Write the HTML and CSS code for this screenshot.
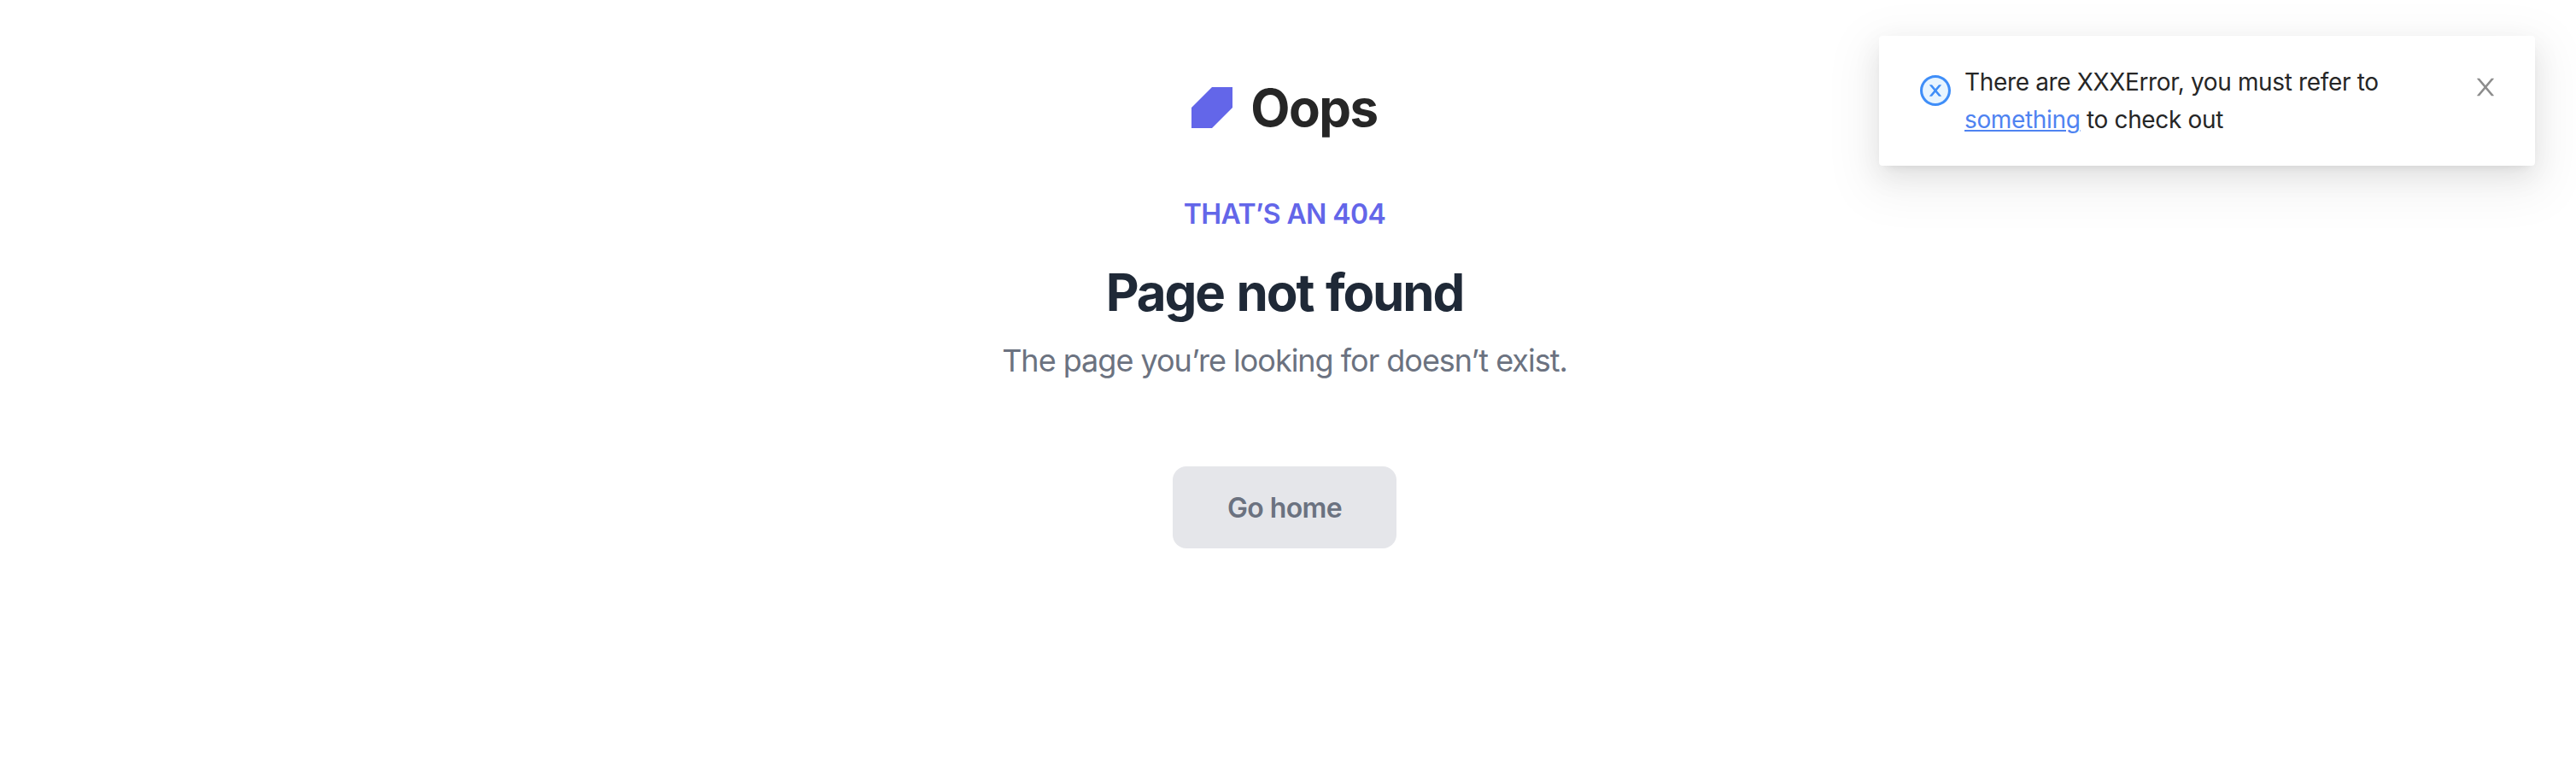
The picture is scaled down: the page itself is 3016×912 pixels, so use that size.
FILE: index.html
```html
<!DOCTYPE html>
<html lang="en">
<head>
<meta charset="utf-8">
<title>Page not found</title>
<link rel="stylesheet" href="styles.css">
</head>
<body>
<main class="page">
  <div class="brand">
    <svg class="brand-mark" viewBox="0 0 48 48"><path d="M24 0H48V24L24 48H0V24Z" fill="#6366e9"/></svg>
    <span class="brand-name">Oops</span>
  </div>
  <p class="eyebrow">THAT’S AN 404</p>
  <h1 class="title">Page not found</h1>
  <p class="subtitle">The page you’re looking for doesn’t exist.</p>
  <button class="home-button" type="button">Go home</button>
</main>
<aside class="notice" role="alert">
  <svg class="notice-icon" viewBox="64 65 896 896"><circle cx="512" cy="513" r="410" fill="#e8f5ff"/><path fill="#3f8ef8" d="M512 65C264.600 65 64 265.600 64 513s200.600 448 448 448 448-200.600 448-448S759.400 65 512 65zm0 820c-205.400 0-372-166.600-372-372s166.600-372 372-372 372 166.600 372 372-166.600 372-372 372z"/><path fill="#3f8ef8" d="M685.400 354.800c0-4.400-3.600-8-8-8l-66 .3L512 465.600l-99.300-118.400-66.100-.3c-4.400 0-8 3.500-8 8 0 1.900.7 3.700 1.900 5.200l130.100 155L340.500 670a8.320 8.320 0 00-1.900 5.200c0 4.400 3.600 8 8 8l66.100-.3L512 564.400l99.300 118.400 66 .3c4.400 0 8-3.500 8-8 0-1.900-.7-3.700-1.900-5.200L553.500 515l130.100-155c1.200-1.400 1.800-3.300 1.800-5.200z"/></svg>
  <p class="notice-text">There are XXXError, you must refer to <a class="notice-link" href="#">something</a> to check out</p>
  <svg class="notice-close" viewBox="0 0 1024 1024"><path fill="#8c8c8c" d="M563.800 512l262.500-312.900c4.400-5.200.7-13.100-6.100-13.100h-79.800c-4.700 0-9.200 2.100-12.300 5.700L511.600 449.800 295.100 191.700c-3-3.600-7.500-5.700-12.300-5.700H203c-6.800 0-10.500 7.900-6.100 13.100L459.400 512 196.900 824.900A7.950 7.950 0 00203 838h79.800c4.700 0 9.200-2.100 12.300-5.700l216.500-258.100 216.500 258.100c3 3.600 7.500 5.700 12.300 5.700h79.800c6.800 0 10.500-7.900 6.100-13.100L563.800 512z"/></svg>
</aside>
</body>
</html>
```
FILE: styles.css
```css
* { box-sizing: border-box; margin: 0; }
body {
  min-height: 912px;
  background: #fff;
  font-family: Inter, sans-serif;
  overflow: hidden;
}
.page {
  display: flex;
  flex-direction: column;
  align-items: center;
  padding: 90px 8px 0 0;
}
.brand {
  display: flex;
  align-items: center;
  gap: 21px;
  height: 72px;
}
.brand-mark { width: 48px; height: 48px; }
.brand-name {
  font-size: 60px;
  line-height: 72px;
  font-weight: 700;
  letter-spacing: -1.5px;
  color: #262626;
}
.eyebrow {
  margin-top: 65px;
  font-size: 32px;
  line-height: 48px;
  font-weight: 600;
  letter-spacing: -0.6px;
  color: #6366e9;
}
.title {
  margin-top: 31px;
  font-size: 60px;
  line-height: 72px;
  font-weight: 700;
  letter-spacing: -2.1px;
  word-spacing: 2.5px;
  color: #1f2937;
}
.subtitle {
  margin-top: 16px;
  font-size: 36px;
  line-height: 56px;
  letter-spacing: -1.01px;
  color: #6b7280;
}
.home-button {
  width: 262px;
  height: 96px;
  margin-top: 96px;
  padding: 2px 0 0;
  border: 0;
  border-radius: 16px;
  background: #e5e6ea;
  color: #6b7280;
  font: 600 32px/48px Inter, sans-serif;
  letter-spacing: -0.6px;
}
.notice {
  position: absolute;
  top: 42px;
  right: 48px;
  display: flex;
  width: 768px;
  height: 152px;
  padding: 32px 42px 32px 48px;
  border-radius: 4px;
  background: #fff;
  box-shadow: 0 6px 12px -8px rgba(0, 0, 0, .12), 0 12px 32px rgba(0, 0, 0, .08), 0 18px 56px 16px rgba(0, 0, 0, .05);
}
.notice-icon { width: 36px; height: 36px; margin: 14px 16px 0 0; }
.notice-text {
  width: 520px;
  font-size: 28px;
  line-height: 44px;
  letter-spacing: -0.35px;
  color: #262626;
}
.notice-link { color: #4f83f1; text-underline-offset: 2px; text-decoration-thickness: 2px; }
.notice-close { width: 32px; height: 32px; margin: 12px 0 0 auto; }
```
